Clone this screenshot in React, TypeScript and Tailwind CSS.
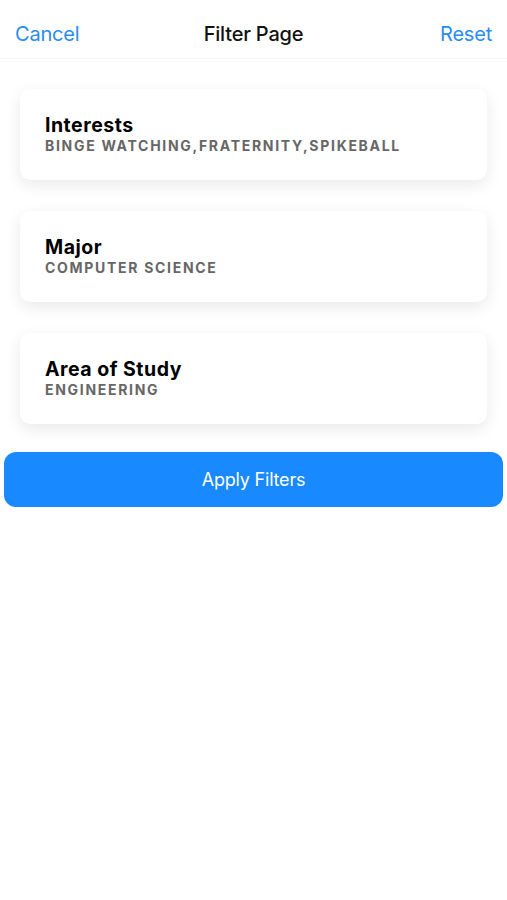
import React from "react";

const filters = [
    { title: "Interests", value: "BINGE WATCHING,FRATERNITY,SPIKEBALL" },
    { title: "Major", value: "COMPUTER SCIENCE" },
    { title: "Area of Study", value: "ENGINEERING" },
];

export default function App() {
    return (
        <div className="w-[507px] h-[900px] bg-white font-['Inter',sans-serif]">
            {/* Nav bar */}
            <div className="h-[59px] grid grid-cols-3 items-center px-[15px] pt-[10px] border-b border-[#f5f5f5]">
                <button className="justify-self-start text-[20px] text-[#2a8cf0] tracking-[-0.2px]">Cancel</button>
                <h1 className="justify-self-center whitespace-nowrap text-[20px] text-[#111] font-medium tracking-[-0.2px]">Filter Page</h1>
                <button className="justify-self-end text-[20px] text-[#2a8cf0] tracking-[-0.2px]">Reset</button>
            </div>

            {/* Filter cards */}
            <div className="flex flex-col gap-[31px] px-[20px] pt-[30px]">
                {filters.map((f) => (
                    <div
                        key={f.title}
                        className="h-[91px] bg-white rounded-[10px] shadow-[0_5px_16px_rgba(0,0,0,0.09)] px-[25px] flex flex-col justify-center"
                    >
                        <div className="text-[19.5px] font-bold text-black leading-[22px] tracking-[0.5px]">{f.title}</div>
                        <div className="text-[14px] font-bold text-[#666] leading-[20px] tracking-[1.7px]">{f.value}</div>
                    </div>
                ))}
            </div>

            {/* Apply */}
            <div className="px-[4px] pt-[28px]">
                <button className="w-full h-[55px] rounded-[12px] bg-[#1889fe] text-white text-[18px] tracking-[-0.2px]">
                    Apply Filters
                </button>
            </div>
        </div>
    );
}
